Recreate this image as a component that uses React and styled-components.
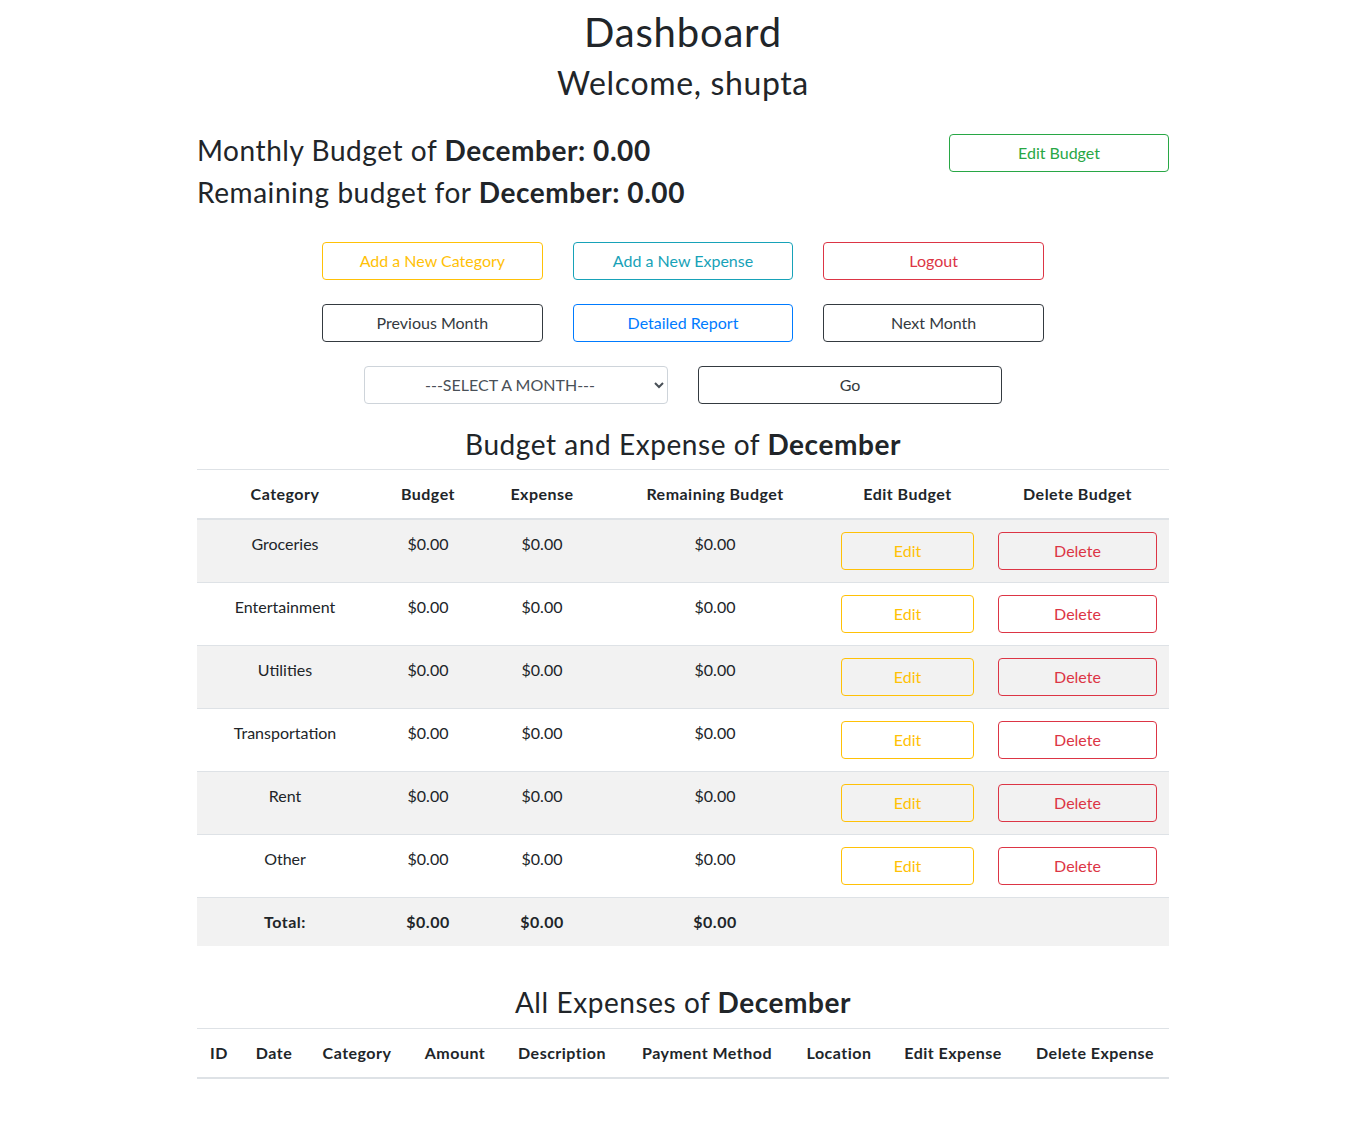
import React from "react";
import styled, { createGlobalStyle } from "styled-components";

const Global = createGlobalStyle`
  html, body { margin: 0; padding: 0; background: #fff; }
  body {
    font-family: "Segoe UI", Lato, "Open Sans", sans-serif;
    font-size: 16px;
    line-height: 1.5;
    color: #212529;
  }
  *, *::before, *::after { box-sizing: border-box; }
`;

const Page = styled.div`
  padding-top: 8px;
`;

const Title = styled.h1`
  margin: 0 0 8px;
  font-size: 40px;
  font-weight: 400;
  line-height: 1.2;
  letter-spacing: 0.02em;
  text-align: center;
`;

const Subtitle = styled.h2`
  margin: 0 0 8px;
  font-size: 32px;
  font-weight: 400;
  line-height: 1.2;
  letter-spacing: 0.02em;
  text-align: center;
`;

const Container = styled.div`
  width: 972px;
  margin: 0 auto;
`;

const BudgetRow = styled.div`
  display: flex;
  justify-content: space-between;
  align-items: flex-start;
  margin-top: 32px;
`;

const Heading3 = styled.h3`
  margin: ${(p) => (p.$mt ? `${p.$mt}px` : 0)} 0 8px;
  font-size: 28px;
  font-weight: 400;
  line-height: 1.2;
  letter-spacing: 0.02em;
  text-align: ${(p) => (p.$center ? "center" : "left")};
`;

const palette = {
  success: "#28a745",
  warning: "#ffc107",
  info: "#17a2b8",
  danger: "#dc3545",
  dark: "#343a40",
  primary: "#007bff",
};

const OutlineButton = styled.button`
  display: block;
  width: ${(p) => p.$width || "100%"};
  height: 38px;
  padding: 6px 12px;
  font-family: inherit;
  font-size: 16px;
  line-height: 1.5;
  text-align: center;
  background: transparent;
  color: ${(p) => palette[p.$variant]};
  border: 1px solid ${(p) => palette[p.$variant]};
  border-radius: 4px;
  cursor: pointer;
`;

const ButtonGrid = styled.div`
  display: grid;
  grid-template-columns: repeat(3, 1fr);
  gap: 24px 30px;
  width: 722px;
  margin: 24px auto 0;
`;

const SelectRow = styled.div`
  display: grid;
  grid-template-columns: 1fr 1fr;
  gap: 30px;
  width: 638px;
  margin: 24px auto 0;
`;

const MonthSelect = styled.select`
  width: 100%;
  height: 38px;
  padding: 6px 12px;
  font-family: inherit;
  font-size: 16px;
  line-height: 1.5;
  color: #495057;
  background: #fff;
  border: 1px solid #ced4da;
  border-radius: 4px;
  text-align: center;
  text-align-last: center;
`;

const Table = styled.table`
  width: 100%;
  border-collapse: collapse;
  table-layout: fixed;
  margin-bottom: 16px;
  color: #212529;
`;

const HeadCell = styled.th`
  padding: 12px 0;
  border-top: 1px solid #dee2e6;
  border-bottom: 2px solid #dee2e6;
  font-weight: 700;
  letter-spacing: 0.03em;
  text-align: center;
  vertical-align: bottom;
  white-space: nowrap;
`;

const BodyRow = styled.tr`
  background: ${(p) => (p.$striped ? "#f2f2f2" : "transparent")};
`;

const Cell = styled.td`
  padding: 12px;
  border-top: 1px solid #dee2e6;
  text-align: center;
  vertical-align: top;
  font-weight: ${(p) => (p.$bold ? 700 : 400)};
  letter-spacing: ${(p) => (p.$bold ? "0.03em" : "normal")};
`;

const categories = [
  "Groceries",
  "Entertainment",
  "Utilities",
  "Transportation",
  "Rent",
  "Other",
];

const budgetCols = [176, 110, 118, 228, 157, 183];
const expenseCols = [44, 66, 100, 96, 118, 172, 92, 136, 148];

export default function App() {
  return (
    <>
      <Global />
      <Page>
        <Title>Dashboard</Title>
        <Subtitle>Welcome, shupta</Subtitle>
        <Container>
          <BudgetRow>
            <div>
              <Heading3>
                Monthly Budget of <b>December: 0.00</b>
              </Heading3>
              <Heading3>
                Remaining budget for <b>December: 0.00</b>
              </Heading3>
            </div>
            <OutlineButton $variant="success" $width="220px">
              Edit Budget
            </OutlineButton>
          </BudgetRow>

          <ButtonGrid>
            <OutlineButton $variant="warning">Add a New Category</OutlineButton>
            <OutlineButton $variant="info">Add a New Expense</OutlineButton>
            <OutlineButton $variant="danger">Logout</OutlineButton>
            <OutlineButton $variant="dark">Previous Month</OutlineButton>
            <OutlineButton $variant="primary">Detailed Report</OutlineButton>
            <OutlineButton $variant="dark">Next Month</OutlineButton>
          </ButtonGrid>

          <SelectRow>
            <MonthSelect defaultValue="">
              <option value="">---SELECT A MONTH---</option>
            </MonthSelect>
            <OutlineButton $variant="dark">Go</OutlineButton>
          </SelectRow>

          <Heading3 $center $mt={24}>
            Budget and Expense of <b>December</b>
          </Heading3>
          <Table>
            <colgroup>
              {budgetCols.map((w, i) => (
                <col key={i} style={{ width: w }} />
              ))}
            </colgroup>
            <thead>
              <tr>
                <HeadCell>Category</HeadCell>
                <HeadCell>Budget</HeadCell>
                <HeadCell>Expense</HeadCell>
                <HeadCell>Remaining Budget</HeadCell>
                <HeadCell>Edit Budget</HeadCell>
                <HeadCell>Delete Budget</HeadCell>
              </tr>
            </thead>
            <tbody>
              {categories.map((c, i) => (
                <BodyRow key={c} $striped={i % 2 === 0}>
                  <Cell>{c}</Cell>
                  <Cell>$0.00</Cell>
                  <Cell>$0.00</Cell>
                  <Cell>$0.00</Cell>
                  <Cell>
                    <OutlineButton $variant="warning">Edit</OutlineButton>
                  </Cell>
                  <Cell>
                    <OutlineButton $variant="danger">Delete</OutlineButton>
                  </Cell>
                </BodyRow>
              ))}
              <BodyRow $striped>
                <Cell $bold>Total:</Cell>
                <Cell $bold>$0.00</Cell>
                <Cell $bold>$0.00</Cell>
                <Cell $bold>$0.00</Cell>
                <Cell />
                <Cell />
              </BodyRow>
            </tbody>
          </Table>

          <Heading3 $center $mt={40}>
            All Expenses of <b>December</b>
          </Heading3>
          <Table>
            <colgroup>
              {expenseCols.map((w, i) => (
                <col key={i} style={{ width: w }} />
              ))}
            </colgroup>
            <thead>
              <tr>
                <HeadCell>ID</HeadCell>
                <HeadCell>Date</HeadCell>
                <HeadCell>Category</HeadCell>
                <HeadCell>Amount</HeadCell>
                <HeadCell>Description</HeadCell>
                <HeadCell>Payment Method</HeadCell>
                <HeadCell>Location</HeadCell>
                <HeadCell>Edit Expense</HeadCell>
                <HeadCell>Delete Expense</HeadCell>
              </tr>
            </thead>
            <tbody />
          </Table>
        </Container>
      </Page>
    </>
  );
}
